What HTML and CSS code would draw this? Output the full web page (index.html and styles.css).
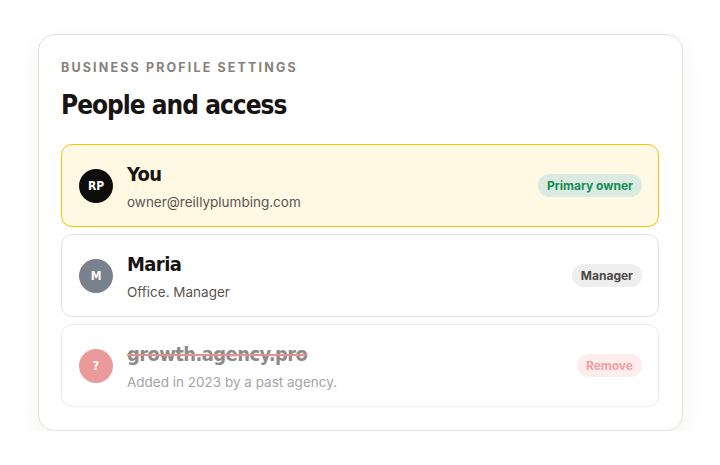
FILE: index.html
```html
<!DOCTYPE html>
<html>
<head>
<meta charset="utf-8">
<link rel="stylesheet" href="styles.css">
</head>
<body>
<div class="card">
  <div class="eyebrow">BUSINESS PROFILE SETTINGS</div>
  <h1 class="title">People and access</h1>
  <div class="list">
    <div class="row row-owner">
      <div class="avatar av-dark">RP</div>
      <div class="info">
        <div class="name">You</div>
        <div class="sub">owner@reillyplumbing.com</div>
      </div>
      <span class="pill pill-green">Primary owner</span>
    </div>
    <div class="row">
      <div class="avatar av-gray">M</div>
      <div class="info">
        <div class="name">Maria</div>
        <div class="sub">Office. Manager</div>
      </div>
      <span class="pill pill-gray">Manager</span>
    </div>
    <div class="row row-old">
      <div class="avatar av-red">?</div>
      <div class="info">
        <div class="name name-struck">growth.agency.pro</div>
        <div class="sub sub-faded">Added in 2023 by a past agency.</div>
      </div>
      <span class="pill pill-red">Remove</span>
    </div>
  </div>
</div>
</body>
</html>
```
FILE: styles.css
```css
* { box-sizing: border-box; }
html, body { margin: 0; padding: 0; background: #ffffff; }
body {
  font-family: Inter, "Liberation Sans", sans-serif;
  padding: 34px 37px 0 38px;
}
.card {
  width: 645px;
  height: 397px;
  border: 1px solid #e3e1db;
  border-radius: 16px;
  background: #fff;
  box-shadow: 0 10px 24px rgba(60, 50, 30, 0.06);
  padding: 25px 23px 0 22px;
}
.eyebrow {
  font-size: 12.5px;
  font-weight: 700;
  letter-spacing: 2.15px;
  color: #86817b;
  line-height: 16px;
}
.title {
  margin: 14px 0 0 0;
  font-family: "DejaVu Sans Condensed", Inter, sans-serif;
  font-size: 26px;
  font-weight: 700;
  letter-spacing: -1px;
  color: #171412;
  line-height: 30px;
}
.list {
  margin-top: 24px;
  display: flex;
  flex-direction: column;
  gap: 7px;
}
.row {
  height: 83px;
  border: 1px solid #e3e1dc;
  border-radius: 11px;
  display: flex;
  align-items: center;
  padding: 0 16px 0 17px;
}
.row-owner {
  background: #fff8e3;
  border-color: #f4c600;
}
.row-old { border-color: #ececec; }
.avatar {
  width: 34px;
  height: 34px;
  border-radius: 50%;
  flex: none;
  display: flex;
  align-items: center;
  justify-content: center;
  color: #fff;
  font-size: 12px;
  font-weight: 700;
  font-family: "DejaVu Sans Condensed", Inter, sans-serif;
}
.av-dark { background: #0f0d0c; }
.av-gray { background: #78818c; }
.av-red { background: #ea9a9a; }
.info {
  flex: 1;
  margin-left: 14px;
  display: flex;
  flex-direction: column;
  gap: 8px;
  margin-top: 0;
}
.name {
  font-family: "DejaVu Sans Condensed", Inter, sans-serif;
  font-size: 20px;
  font-weight: 700;
  color: #171412;
  line-height: 24px;
  letter-spacing: -0.6px;
}
.name-struck {
  color: #8d8b89;
  text-decoration: line-through;
  text-decoration-color: #e88f8f;
  text-decoration-thickness: 2px;
}
.sub {
  font-size: 13.5px;
  color: #5a5551;
  line-height: 16px;
}
.sub-faded { color: #a6a4a2; }
.pill {
  flex: none;
  height: 23px;
  border-radius: 12px;
  padding: 0 9px;
  display: flex;
  align-items: center;
  font-size: 12px;
  font-weight: 700;
}
.pill-green { background: #dcebe1; color: #138c56; }
.pill-gray { background: #eeeeee; color: #4b4845; }
.pill-red { background: #ffeded; color: #f0a0a2; }
```
